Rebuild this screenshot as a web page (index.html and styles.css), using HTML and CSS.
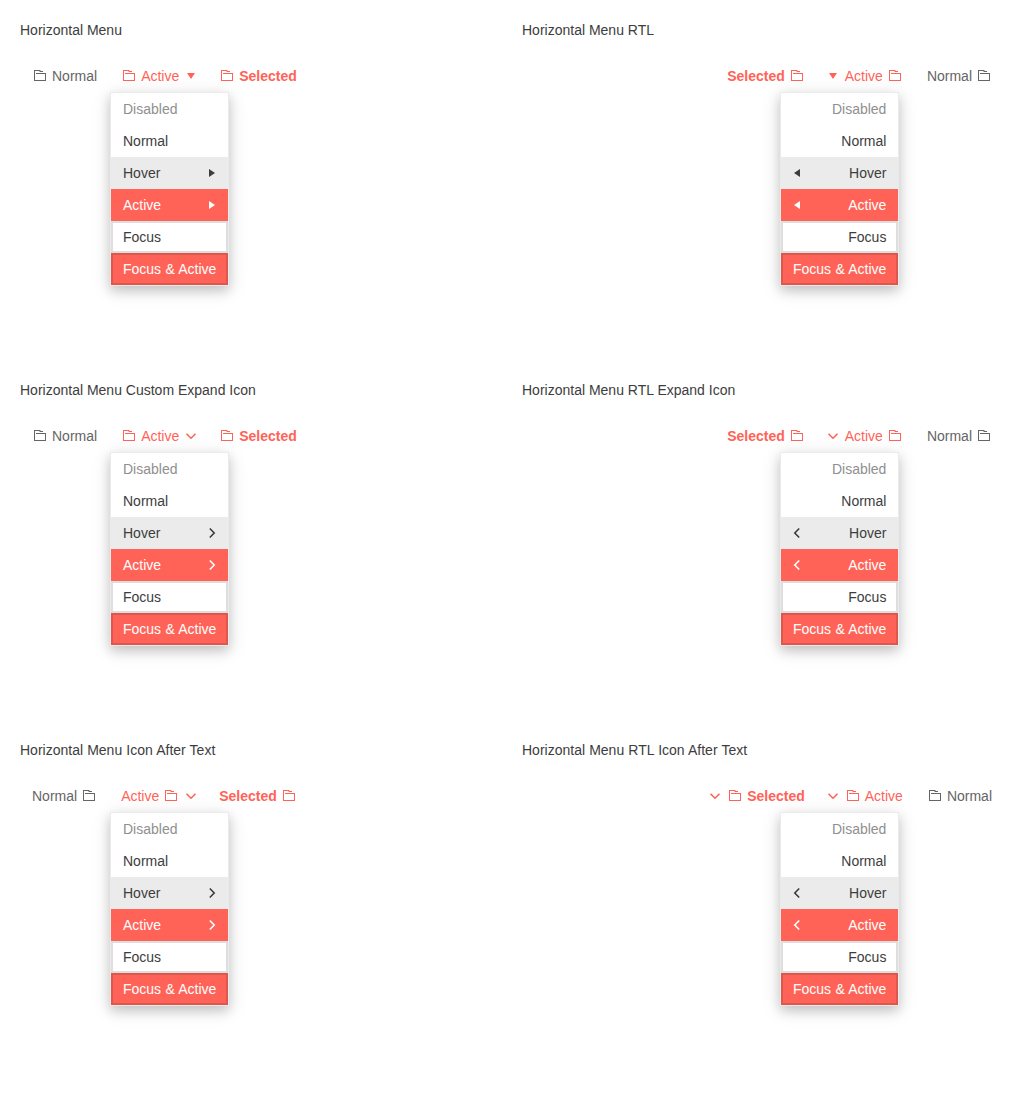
FILE: index.html
```html
<!DOCTYPE html>
<html lang="en">
<head>
<meta charset="utf-8">
<title>Horizontal Menu</title>
<link rel="stylesheet" href="styles.css">
</head>
<body>
<svg class="sprite" aria-hidden="true">
  <symbol id="folder" viewBox="0 0 16 16"><path d="M2 2h6l1 1h2v1H8L7 3H3v9h10V6H4V5h10v8H2z"/></symbol>
  <symbol id="caret" viewBox="0 0 16 16"><path d="M4 5h8l-4 6z"/></symbol>
  <symbol id="chevron" viewBox="0 0 16 16"><path d="M3.500 5.800 8 10.200l4.500-4.400" fill="none" stroke="currentColor" stroke-width="1.600"/></symbol>
</svg>
<main class="grid" id="grid"></main>
<script src="menu.js"></script>
</body>
</html>
```
FILE: styles.css
```css
* { box-sizing: border-box; }
body {
  margin: 0;
  background: #fff;
  color: #3d3d3d;
  font: 14px/20px "Liberation Sans", Arial, sans-serif;
}
.sprite { position: absolute; width: 0; height: 0; }
.grid {
  display: grid;
  grid-template-columns: 1fr 1fr;
  grid-auto-rows: 360px;
  column-gap: 20px;
  padding: 20px 20px 0;
}
.title { margin: 0 0 20px; font-size: 14px; font-weight: 400; }
.title.spaced { word-spacing: .25px; }
.menu { display: flex; }
.item {
  display: flex;
  align-items: center;
  gap: 4px;
  height: 32px;
  padding: 0 12px;
  color: #656565;
  white-space: nowrap;
}
.item.active, .item.selected { color: #ff6358; }
.item.selected { font-weight: 700; }
.icon { width: 16px; height: 16px; flex: none; fill: currentColor; }
.icon-after .label { order: -1; }
.arrow { margin-inline-end: -4px; }
.popup {
  width: 119px;
  margin-inline-start: 90px;
  border: 1px solid #ebebeb;
  background: #fff;
  box-shadow: 0 5px 10px rgba(0, 0, 0, .14), 0 4px 18px rgba(0, 0, 0, .14);
}
.rtl .popup { margin-inline-start: 105px; }
.row {
  display: flex;
  align-items: center;
  justify-content: space-between;
  height: 32px;
  padding: 0 12px;
  white-space: nowrap;
  word-spacing: .4px;
}
.rtl .row { padding-right: 11.6px; }
.row .icon { transform: rotate(-90deg); }
.rtl .row .icon { transform: rotate(90deg); }
.row.disabled { color: #8f8f8f; }
.row.hover { background: #ebebeb; }
.row.on { background: #ff6358; color: #fff; }
.row.focus { box-shadow: inset 0 0 0 2px rgba(0, 0, 0, .13); }
```
FILE: menu.js
```js
const icon = (name, cls = '') => `<svg class="icon ${cls}"><use href="#${name}"/></svg>`;

const item = (label, cls, arrow) =>
  `<div class="item ${cls}">${icon('folder')}<span class="label">${label}</span>${arrow ? icon(arrow, 'arrow') : ''}</div>`;

const menu = (title, { rtl = false, after = false, arrow = 'caret', selectedArrow = false }) => `
  <section class="${rtl ? 'rtl' : ''}">
    <h2 class="title ${after ? 'spaced' : ''}">${title}</h2>
    <div dir="${rtl ? 'rtl' : 'ltr'}">
      <nav class="menu ${after ? 'icon-after' : ''}">
        ${item('Normal', '')}
        ${item('Active', 'active', arrow)}
        ${item('Selected', 'selected', selectedArrow && arrow)}
      </nav>
      <div class="popup">
        <div class="row disabled">Disabled</div>
        <div class="row">Normal</div>
        <div class="row hover">Hover${icon(arrow, 'arrow')}</div>
        <div class="row on">Active${icon(arrow, 'arrow')}</div>
        <div class="row focus">Focus</div>
        <div class="row on focus">Focus &amp; Active</div>
      </div>
    </div>
  </section>`;

document.getElementById('grid').innerHTML = [
  menu('Horizontal Menu', {}),
  menu('Horizontal Menu RTL', { rtl: true }),
  menu('Horizontal Menu Custom Expand Icon', { arrow: 'chevron' }),
  menu('Horizontal Menu RTL Expand Icon', { rtl: true, arrow: 'chevron' }),
  menu('Horizontal Menu Icon After Text', { after: true, arrow: 'chevron' }),
  menu('Horizontal Menu RTL Icon After Text', { rtl: true, after: true, arrow: 'chevron', selectedArrow: true })
].join('');
```
